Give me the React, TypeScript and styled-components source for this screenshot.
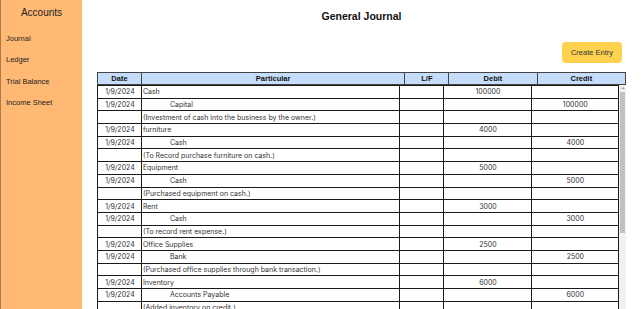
import styled, { createGlobalStyle } from "styled-components";

const GlobalStyle = createGlobalStyle`
  html, body {
    margin: 0;
    height: 100%;
    overflow: hidden;
  }
  body {
    font-family: "Liberation Sans", Arial, sans-serif;
    color: #222;
  }
  #root {
    height: 100%;
  }
`;

const Layout = styled.div`
  display: flex;
  height: 100vh;
`;

const Sidebar = styled.aside`
  width: 81px;
  flex-shrink: 0;
  background: #ffb974;
  border-left: 1px solid #a97b4c;
  display: flex;
  flex-direction: column;
`;

const SideTitle = styled.h2`
  margin: 0;
  padding-top: 7px;
  height: 21px;
  font-size: 10px;
  font-weight: normal;
  text-align: center;
  color: #222;
`;

const NavList = styled.nav`
  display: flex;
  flex-direction: column;
  padding: 0 0 0 5px;
`;

const NavItem = styled.a`
  height: 21.3px;
  line-height: 21.3px;
  font-size: 7.5px;
  color: #222;
  text-decoration: none;
  cursor: pointer;
`;

const Main = styled.main`
  flex: 1;
  min-width: 0;
  padding: 0 14px 0 15px;
  display: flex;
  flex-direction: column;
  overflow: hidden;
`;

const Title = styled.h1`
  margin: 10px 0 0;
  font-size: 10.5px;
  line-height: 12px;
  text-align: center;
  font-weight: bold;
  color: #111;
`;

const Toolbar = styled.div`
  display: flex;
  justify-content: flex-end;
  margin-top: 20px;
  padding-right: 4px;
`;

const CreateButton = styled.button`
  width: 60px;
  height: 21px;
  border: none;
  border-radius: 4px;
  background: #fed14e;
  font-family: "Liberation Sans", Arial, sans-serif;
  font-size: 7.5px;
  color: #333;
  cursor: pointer;
`;

const HeadTable = styled.table`
  width: 100%;
  margin-top: 9px;
  border-collapse: collapse;
  table-layout: fixed;
`;

const Th = styled.th<{ w: string }>`
  width: ${({ w }) => w};
  height: 11px;
  padding: 0;
  background: #c5ddfa;
  border: 1px solid #444;
  font-size: 7.5px;
  font-weight: bold;
  color: #111;
  text-align: center;
`;

const BodyWrap = styled.div`
  display: flex;
  height: 290px;
`;

const BodyScroll = styled.div`
  flex: 1;
  min-width: 0;
  overflow: hidden;
`;

const ScrollTrack = styled.div`
  width: 7px;
  flex-shrink: 0;
  background: #f1f1f1;
  display: flex;
  flex-direction: column;
  align-items: center;
`;

const ScrollArrow = styled.div`
  margin-top: 2px;
  width: 0;
  height: 0;
  border-left: 2px solid transparent;
  border-right: 2px solid transparent;
  border-bottom: 2px solid #a3a3a3;
`;

const ScrollThumb = styled.div`
  margin-top: 3px;
  width: 5px;
  background: #c1c1c1;
`;

const BodyTable = styled.table`
  width: 100%;
  border-collapse: collapse;
  table-layout: fixed;
`;

const Td = styled.td<{ w?: string; align?: "left" | "center"; indent?: boolean }>`
  ${({ w }) => (w ? `width: ${w};` : "")}
  height: 11.7px;
  padding: 0 0 0 ${({ indent }) => (indent ? "28px" : "1px")};
  border: 1px solid #1a1a1a;
  font-family: Inter, "Liberation Sans", sans-serif;
  font-size: 7px;
  color: #333;
  text-align: ${({ align }) => align || "left"};
  white-space: nowrap;
  overflow: hidden;
`;

const widths = ["8.2%", "50.2%", "8.2%", "16.7%", "16.7%"];

type Entry = {
  date: string;
  debit: string;
  credit: string;
  amount: number;
  note: string;
};

const entries: Entry[] = [
  { date: "1/9/2024", debit: "Cash", credit: "Capital", amount: 100000, note: "(Investment of cash into the business by the owner.)" },
  { date: "1/9/2024", debit: "furniture", credit: "Cash", amount: 4000, note: "(To Record purchase furniture on cash.)" },
  { date: "1/9/2024", debit: "Equipment", credit: "Cash", amount: 5000, note: "(Purchased equipment on cash.)" },
  { date: "1/9/2024", debit: "Rent", credit: "Cash", amount: 3000, note: "(To record rent expense.)" },
  { date: "1/9/2024", debit: "Office Supplies", credit: "Bank", amount: 2500, note: "(Purchased office supplies through bank transaction.)" },
  { date: "1/9/2024", debit: "Inventory", credit: "Accounts Payable", amount: 6000, note: "(Added inventory on credit.)" },
  { date: "2/9/2024", debit: "Salaries", credit: "Cash", amount: 7000, note: "(Paid salaries to the staff.)" },
  { date: "2/9/2024", debit: "Utilities", credit: "Bank", amount: 1200, note: "(Paid electricity bill.)" },
  { date: "3/9/2024", debit: "Accounts Receivable", credit: "Sales", amount: 8000, note: "(Sold goods on credit.)" },
  { date: "3/9/2024", debit: "Bank", credit: "Cash", amount: 10000, note: "(Deposited cash into bank.)" },
  { date: "4/9/2024", debit: "Insurance", credit: "Cash", amount: 1500, note: "(Paid insurance premium.)" },
  { date: "4/9/2024", debit: "Accounts Payable", credit: "Bank", amount: 3000, note: "(Paid supplier through bank.)" },
];

const navItems = ["Journal", "Ledger", "Trial Balance", "Income Sheet"];
const headers = ["Date", "Particular", "L/F", "Debit", "Credit"];

export default function App() {
  return (
    <>
      <GlobalStyle />
      <Layout>
        <Sidebar>
          <SideTitle>Accounts</SideTitle>
          <NavList>
            {navItems.map((item) => (
              <NavItem key={item}>{item}</NavItem>
            ))}
          </NavList>
        </Sidebar>

        <Main>
          <Title>General Journal</Title>
          <Toolbar>
            <CreateButton>Create Entry</CreateButton>
          </Toolbar>

          <HeadTable>
            <thead>
              <tr>
                {headers.map((h, i) => (
                  <Th key={h} w={widths[i]}>{h}</Th>
                ))}
              </tr>
            </thead>
          </HeadTable>

          <BodyWrap>
            <BodyScroll>
              <BodyTable>
                <tbody>
                  {entries.map((e, idx) => [
                    <tr key={`${idx}-d`}>
                      <Td w={widths[0]} align="center">{e.date}</Td>
                      <Td w={widths[1]}>{e.debit}</Td>
                      <Td w={widths[2]} />
                      <Td w={widths[3]} align="center">{e.amount}</Td>
                      <Td w={widths[4]} />
                    </tr>,
                    <tr key={`${idx}-c`}>
                      <Td align="center">{e.date}</Td>
                      <Td indent>{e.credit}</Td>
                      <Td />
                      <Td />
                      <Td align="center">{e.amount}</Td>
                    </tr>,
                    <tr key={`${idx}-n`}>
                      <Td />
                      <Td>{e.note}</Td>
                      <Td />
                      <Td />
                      <Td />
                    </tr>,
                  ])}
                </tbody>
              </BodyTable>
            </BodyScroll>
            <ScrollTrack>
              <ScrollArrow />
              <ScrollThumb style={{ height: 141 }} />
            </ScrollTrack>
          </BodyWrap>
        </Main>
      </Layout>
    </>
  );
}
